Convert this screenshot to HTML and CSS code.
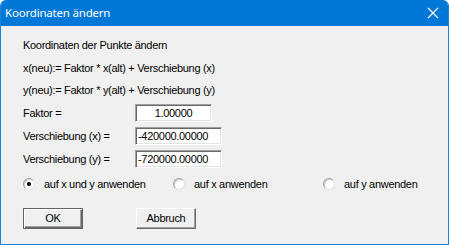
FILE: index.html
```html
<!DOCTYPE html>
<html lang="de">
<head>
  <meta charset="UTF-8" />
  <title>Koordinaten ändern</title>
  <link rel="stylesheet" href="styles.css">
</head>
<body>
  <div class="window">
    <header class="titlebar">
      <span class="title">Koordinaten ändern</span>
      <svg class="close" width="12" height="12" viewBox="0 0 12 12">
        <path d="M1 1 L11 11 M11 1 L1 11" stroke="#fff" stroke-width="1.2" fill="none" />
      </svg>
    </header>

    <main class="dialog">
      <p class="line">Koordinaten der Punkte ändern</p>
      <p class="line">x(neu):= Faktor * x(alt) + Verschiebung (x)</p>
      <p class="line">y(neu):= Faktor * y(alt) + Verschiebung (y)</p>

      <div class="fields">
        <label class="field">
          <span class="field-label">Faktor =</span>
          <span class="edit edit-short centered">1.00000</span>
        </label>
        <label class="field">
          <span class="field-label">Verschiebung (x) =</span>
          <span class="edit">-420000.00000</span>
        </label>
        <label class="field">
          <span class="field-label">Verschiebung (y) =</span>
          <span class="edit">-720000.00000</span>
        </label>
      </div>

      <div class="radios">
        <span class="radio-item r1"><span class="radio checked"></span>auf x und y anwenden</span>
        <span class="radio-item r2"><span class="radio"></span>auf x anwenden</span>
        <span class="radio-item"><span class="radio"></span>auf y anwenden</span>
      </div>

      <div class="buttons">
        <button class="btn btn-default">OK</button>
        <button class="btn">Abbruch</button>
      </div>
    </main>
  </div>
</body>
</html>
```

FILE: styles.css
```css
body {
  margin: 0;
  font-family: "Liberation Sans", Arial, sans-serif;
  font-size: 11px;
  letter-spacing: -0.3px;
  color: #000;
  background: #fff;
}

.window {
  box-sizing: border-box;
  width: 449px;
  height: 245px;
  background: #f0f0f0;
  border: 1px solid #1883d7;
  border-top: none;
  border-radius: 6px 6px 0 0;
  overflow: hidden;
  display: flex;
  flex-direction: column;
}

.titlebar {
  height: 26px;
  background: #0078d7;
  color: #fff;
  display: flex;
  align-items: center;
  justify-content: space-between;
  padding: 0 9px 0 4px;
  flex-shrink: 0;
}

.title {
  font-family: "Noto Sans", "Open Sans", sans-serif;
  font-size: 11.5px;
  letter-spacing: -0.2px;
  margin-top: -1px;
}

.close {
  margin-top: -1px;
}

.dialog {
  padding: 8px 0 0 22px;
}

.line {
  margin: 0;
  height: 22.5px;
  line-height: 22px;
}

.fields {
  display: flex;
  flex-direction: column;
  gap: 5px;
  margin-top: 2px;
}

.field {
  display: flex;
  align-items: center;
  height: 18px;
}

.field-label {
  width: 112px;
}

.edit {
  box-sizing: border-box;
  width: 87px;
  height: 18px;
  line-height: 14px;
  padding: 1px 2px 0;
  background: #fff;
  border: 1px solid;
  border-color: #a0a0a0 #fff #fff #a0a0a0;
  box-shadow: inset 1px 1px 0 #696969, inset -1px -1px 0 #e3e3e3;
}

.edit-short {
  width: 77px;
}

.centered {
  text-align: center;
}

.radios {
  display: flex;
  align-items: center;
  height: 22px;
  margin-top: 5px;
}

.radio-item {
  display: flex;
  align-items: center;
  gap: 9px;
}

.r1 {
  width: 150px;
}

.r2 {
  width: 150px;
}

.radio {
  box-sizing: border-box;
  width: 12px;
  height: 12px;
  border-radius: 50%;
  background: #fff;
  border: 1px solid;
  border-color: #a0a0a0 #e3e3e3 #e3e3e3 #a0a0a0;
  box-shadow: inset 1px 1px 0 #d0d0d0;
  display: flex;
  align-items: center;
  justify-content: center;
}

.radio.checked::after {
  content: "";
  width: 4px;
  height: 4px;
  border-radius: 50%;
  background: #000;
}

.buttons {
  display: flex;
  gap: 53px;
  margin-top: 13px;
}

.btn {
  box-sizing: border-box;
  width: 60px;
  height: 21px;
  padding: 0;
  font-family: inherit;
  font-size: 11px;
  letter-spacing: inherit;
  color: #000;
  background: #f0f0f0;
  border: 1px solid;
  border-color: #fff #696969 #696969 #fff;
  box-shadow: inset -1px -1px 0 #a0a0a0;
}

.btn-default {
  border: 1px solid #646464;
  box-shadow: inset 1px 1px 0 #fff, inset -1px -1px 0 #696969, inset -2px -2px 0 #a0a0a0;
}
```
